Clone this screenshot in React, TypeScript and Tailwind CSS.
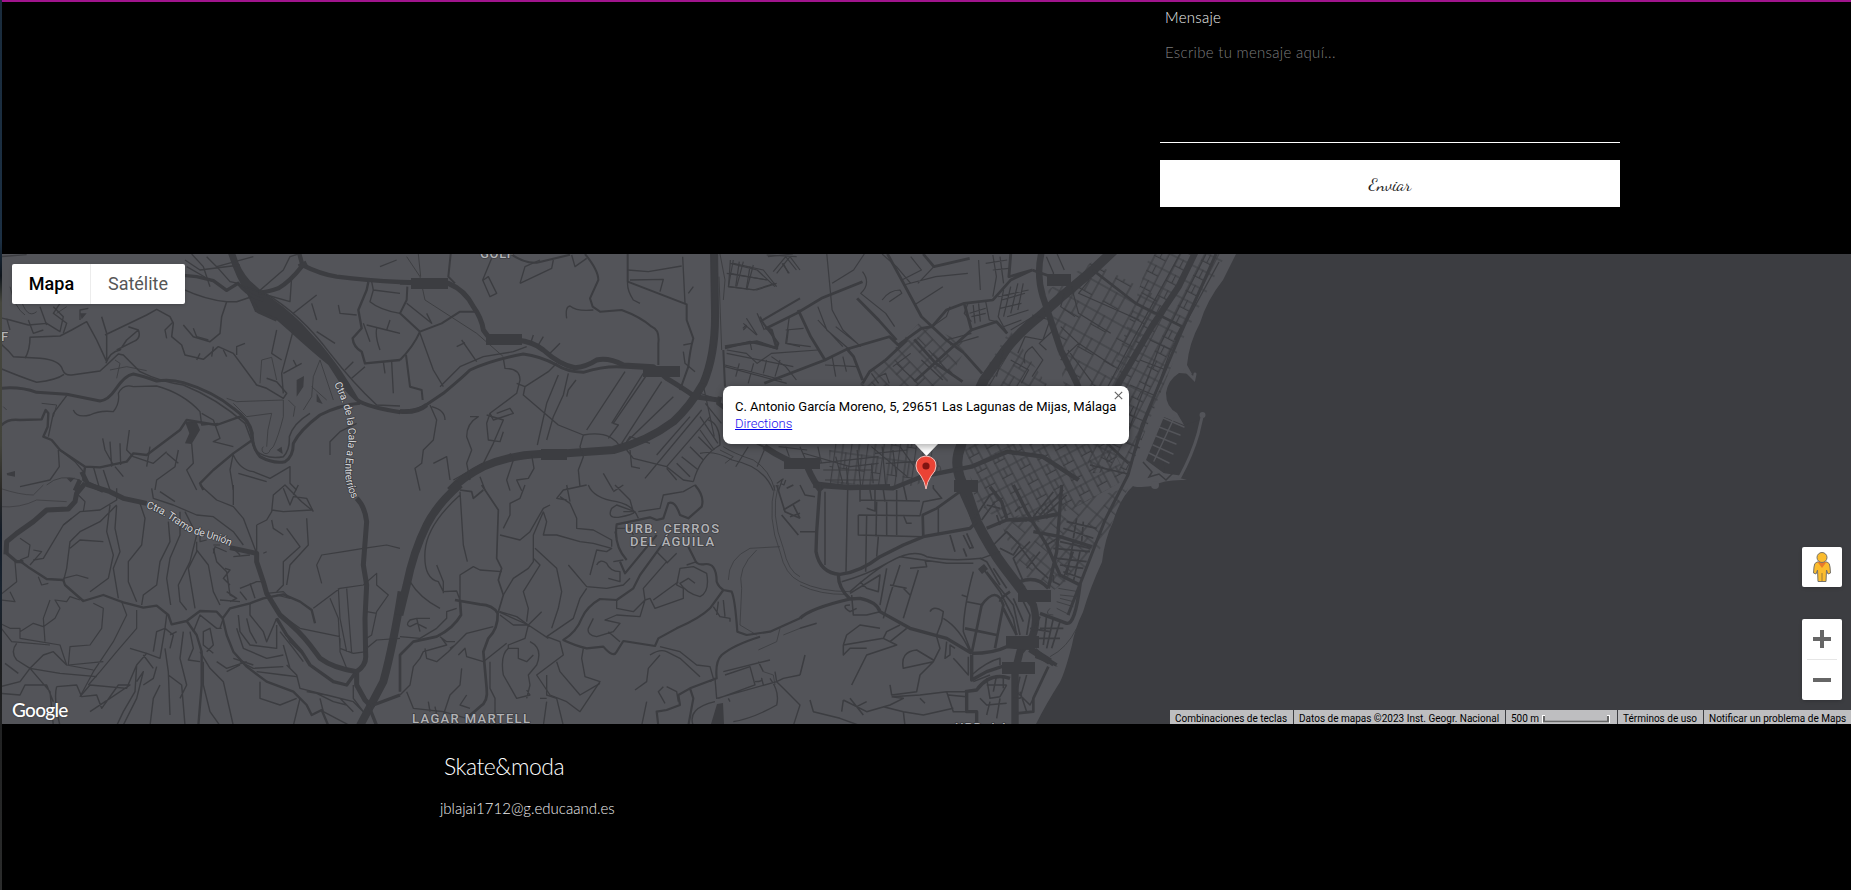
import React from "react";

const ROAD = "#3c3d41";
const LAND = "#535459";

type Stroke = [number, string];

function Tile({ t, lines }: { t: string; lines: Stroke[] }) {
  return (
    <g transform={t} fill="none" stroke={ROAD} strokeLinejoin="round">
      {lines.map(([w, d], i) => (
        <path key={i} d={d} strokeWidth={w} />
      ))}
    </g>
  );
}

const northWest: Stroke[] = [
  [13, "M895 0L907 45Q960 72 1010 80Q1100 92 1200 96M905 50Q870 95 835 115Q800 128 775 127"],
  [26, "M905 38L912 52"],
  [10, "M550 76L590 80L640 92L680 121L714 100Q745 140 790 150M760 160L775 185L830 210"],
  [9, "M0 415Q60 409 110 427L200 433Q260 445 300 453Q325 450 345 420Q375 375 400 372Q430 378 470 393Q510 386 550 398Q640 425 700 475Q750 510 757 550Q755 590 780 620Q820 642 855 635Q880 620 880 580Q900 540 960 495Q1020 465 1080 460"],
  [7, "M0 530Q20 505 60 510L125 508L137 480L145 490L143 530L130 560L155 570L180 600L255 650L250 690L300 720M255 650L300 652L380 635L400 610L440 615L500 570L540 540L560 510L650 525L720 500Q748 510 757 570L700 610L640 660L600 700L610 720M1105 96L1100 120L1075 180L1085 235L1058 265Q1060 290 1085 305L1095 340L1200 330"],
  [14, "M245 665L262 700L310 722M240 690L225 722"],
  [4.5, "M705 100Q745 115 795 130Q900 190 990 310Q1060 400 1130 465L1200 468M0 280Q25 300 40 320L120 325Q180 330 188 360Q195 377 215 375L300 363L320 345L355 312L370 315L420 365Q480 395 550 405Q650 445 735 520L765 600Q800 630 850 620Q870 600 868 560Q880 520 930 490M0 355Q60 380 110 397Q170 390 192 373M75 325Q90 300 90 262L180 258L215 240L260 215L290 270L320 335L320 250L305 200M315 255L440 195L470 178L510 200L520 220L515 260L545 285L555 315L610 328L655 290L700 310L770 405L800 415L850 445L860 430L830 395L800 385M550 225L580 260L630 275L660 250L665 200L680 155Q620 150 550 118M680 155L710 155L755 140M318 340Q330 305 360 300L380 270L415 240M385 230L415 240Q425 265 400 275L350 300"],
  [4, "M200 437L160 490L145 560M220 480Q230 505 270 495Q300 480 340 485Q360 460 355 430Q370 400 400 410L470 408Q550 430 600 485L605 525L655 520M605 490L640 510L660 565L640 575L700 590M500 605L460 640L400 620L380 600L388 540M308 565L315 600L340 645M330 575L335 650M360 580L362 645M450 590L440 650M280 650L300 720M310 660L330 720M345 650L370 680M175 600L178 650L150 690L60 710M180 600L225 635L250 665M535 600L525 650L470 690L465 720M500 610L535 640M575 580L580 640L560 660L590 720M700 610L690 660L700 720M700 615Q720 660 760 665L810 685L870 650L870 700L890 720M715 670L800 695M775 125L850 60L870 20L895 12M800 135L870 155L875 80M880 190L950 135M950 210L935 160M950 245L1005 280M880 240L845 370L850 430M830 240L815 310L845 330M710 315L710 290L735 280M850 370L905 340M890 350L880 330M1095 350L1055 385M1060 335L1035 360"],
  [4, "M0 20L80 14M240 210L240 180L265 175M120 170L140 225M85 210L100 250L130 240M0 203L30 210L85 225L140 220L180 245L190 200L160 170M20 205L30 240M180 160L160 190L200 220L190 250M580 235L590 260L625 270M575 12L610 50L630 110M555 30L600 60L720 45M630 90L560 50M650 50L690 95L715 100M500 265L495 240L520 215M600 310L590 330M640 290L635 320M670 300L680 320M620 20L650 50L760 20M1115 95L1120 120L1200 130M1120 120L1110 155Q1140 180 1200 190M1090 220L1110 275M1100 225L1160 240L1170 210M1130 235Q1125 260 1140 300M1160 240L1200 250M1015 165L1020 190L1070 195M1150 335L1155 370M1175 335L1180 430M1070 520L1020 545L990 575L990 615M1140 50L1190 30"],
  [2.6, "M680 445L710 455L850 450L850 500Q835 560 820 590L810 600M700 460L740 500L815 490Q800 540 800 590M780 400L785 330L815 322L830 390M865 450L885 470L880 500M910 480L935 440L940 380L960 330L970 360L1000 450M935 410L980 450M330 360L380 350L440 362M345 330L360 340L350 385M200 170L170 190M140 705Q180 670 240 690M810 600A12 12 0 1 1 790 590"],
  [3, "M60 140Q80 210 110 185M30 110Q45 175 75 195M20 480L10 470M125 460L170 465L160 500"],
];

const northCentre: Stroke[] = [
  [15, "M0 97L60 98L145 100Q195 120 220 170Q245 205 250 240L265 260L350 270Q400 275 430 300Q480 345 525 353Q560 350 590 330Q625 322 670 345L760 350L800 385Q850 415 885 440L955 450"],
  [24, "M942 0L945 180Q948 310 910 400Q870 470 820 515Q740 575 640 600L500 610L420 612Q330 615 250 650Q190 680 150 722"],
  [13, "M0 485Q50 490 80 465M960 440L955 460L975 475"],
  [9, "M0 482Q40 485 70 470L130 430Q190 380 210 360Q275 330 370 312Q420 318 470 345Q500 365 550 367Q620 345 680 352L730 355"],
  [6, "M152 12L145 80L165 100M22 110L20 150L0 190L60 245L125 220L180 185L230 185M0 330Q40 290 60 245M18 315L30 410L65 420L68 450M555 12Q595 60 595 90L570 145L578 170L600 185L665 180Q720 200 755 230Q780 240 775 280L775 345M683 12L683 95L860 163L860 210L880 265Q870 300 865 350L840 420M330 10Q370 40 410 38L510 14M1070 580L1100 595L1150 630M970 300L975 410M975 295L1050 275L1130 295L1135 280L1090 220L1080 200M1080 215L1200 145"],
  [4, "M380 290L340 305L250 320L180 350L120 410M60 250L100 360L130 410M185 270L230 335M170 290L195 278M275 25L248 90L270 140L290 130L265 80L250 90M360 100L375 50L420 30M360 100L455 55L460 30M515 15L525 50L560 25M580 180Q530 185 510 168Q495 170 500 205M683 60L745 65L845 48M690 90L790 88L780 125M848 20L855 160M865 130L880 110M683 95Q680 120 700 150L720 160M310 325L315 355Q360 355 360 390L350 430L270 490L280 510L340 490L330 475L290 490M470 340L445 365L375 410L350 400M375 410L370 435L440 495L475 525L550 555L540 590L550 620L535 660L540 710M475 375L440 460L412 585M505 370L490 435L460 500L440 570M528 390L505 420L500 440M550 555Q630 540 660 590M675 365L560 540M730 370L635 520M740 375L640 520L655 525L625 565M785 395L665 580M820 440L680 575L690 560L750 580"],
  [4, "M905 480L735 685M930 500L800 650M870 500L770 615M925 510Q960 520 960 585Q900 620 880 695M680 600L700 625L800 650L850 690L880 695M690 600L695 650L720 655M800 655L830 690M830 640L870 680M845 620L895 660M870 590L910 630M895 560L935 600M270 490L260 520L265 570L300 575L310 545M210 500L235 500Q200 520 200 560L215 600L200 640L210 690M260 495L310 510L280 580L250 640L160 690M95 470Q135 480 135 510M90 465L110 510L100 570L70 600L65 640L45 655L60 722M100 640L140 620L150 690M330 610L340 630L320 690L330 722M395 615L402 655L385 685L350 690L365 722M610 670L640 722M240 680L255 720M20 160L95 220L80 190M390 285L400 255M415 285L430 260M450 310L480 280M850 305L855 340L885 365M850 285L875 280"],
  [2.8, "M20 20L60 80L75 150L230 250L310 320M55 12L62 80M960 12L975 90L970 150M957 80L965 300M970 590Q1000 610 1060 630Q1110 660 1125 722M975 640L1000 620L960 600"],
  [3.5, "M1000 30L985 110L1070 120L1130 100M1000 40L1090 60L1130 110M990 70L1100 90M1060 45L1040 120M1030 35L1010 110M1100 15L1190 20M1130 70L1170 20L1200 60M1150 40L1165 70M975 350L1160 400M980 310L1180 350M1100 330L1090 370M1140 330L1125 380M1030 220L1070 255M1040 230L1030 240M1165 240L1160 280L1200 290M1050 275L1055 300"],
];

const cityNorth: Stroke[] = [
  [15, "M39 0L42 180Q43 310 8 400"],
  [28, "M1160 0L1090 70L1010 142L955 195Q890 250 855 300L795 390L755 480L730 590Q705 650 745 722"],
  [18, "M958 0Q940 70 960 140L985 220L1010 300L1055 400L1120 560M1390 0L1340 110L1265 230L1175 395L1100 560"],
  [8, "M70 290L160 275L215 295L200 240L185 235L270 190L340 145L455 95M275 180L310 260L350 330L410 298L530 260L555 285L620 235L650 230L690 180L740 160L820 150L870 90L930 60M525 12L570 100L620 200L690 270L740 310M410 295L430 320L455 390M350 330L180 400M440 145L500 210L550 270M740 160L760 240L830 215L860 250M580 270L520 330L475 365L455 400M600 268L660 340L735 395M930 60L1010 90M870 12L865 80L930 60M740 310L790 370M760 240L600 395M1100 60L1220 160L1350 230L1330 270M1120 560L1200 640M625 12L655 50L755 25"],
  [18, "M180 590Q240 635 300 650Q320 700 340 722"],
  [13, "M320 700L400 710L540 715L620 680L760 650L860 605L960 620L1060 690"],
  [3.4, "M355 12L370 180M370 100L430 60L460 12M455 65Q480 100 450 130L520 190L545 230M510 12L550 50L590 100M565 90L620 60L590 20M570 105L660 80L750 70M600 165L680 110M655 50L610 100M780 30L785 120M510 150Q530 120 560 120L565 130L530 155M85 30L80 110L150 120L210 100M85 40L160 60L210 110M75 70L190 90M140 50L130 115M110 35L100 110M190 20L260 12M205 65L240 20L270 60M230 40L250 70M130 205L160 255M160 190L180 240M130 225L120 235M250 200L240 280L310 290M240 240L290 235M70 345L230 390M75 300L130 310L160 340L200 310L330 300M200 320L240 350L270 390M110 340L100 380M150 340L135 400M330 170L355 240L420 300M370 180L400 240L450 290M380 230L440 280M330 210L400 290M370 320L380 380M400 320L410 365M350 345L440 350"],
  [3.4, "M650 230L690 200L700 170M690 270L760 250M700 285L780 260M640 300L700 370M620 330L680 390M550 340L600 390M590 310L540 350M480 370L500 400M500 380L520 370L530 400M750 160L740 190L760 215M765 165L770 220M780 160L785 215M800 155L810 210L830 215M755 190L800 175M760 200L800 190M850 120L835 200L860 250M870 110L850 200M890 100L870 190M905 100L890 180M845 150L910 130M840 175L900 160M860 200L920 180M850 230L900 210M835 140L920 120M870 240L940 195M930 195L980 210L960 270L910 260L890 310M910 340Q900 310 930 290L960 330L930 380M850 300L830 380M870 330L920 360L900 400M990 240L950 280L970 300M1010 230L1060 280L1010 330M1060 280L1160 350M1030 300L1100 400M820 15L830 80L820 140M840 20L850 100M800 40L860 30M820 60L865 55M970 20L990 70L980 90M1000 12L1020 60M1020 130L1010 170L1050 200M1040 110L1060 190L1150 250M1090 90L1060 130L1230 210"],
  [3.4, "M135 590L100 650M180 600L160 650M10 410L40 560M0 500L50 580M15 460L60 520M0 430L55 450M0 540L40 600M0 610Q40 600 90 630Q180 650 205 722M290 610L420 650L500 640M330 640L500 620M345 660L480 660M350 690L500 690M380 620L400 700M410 650L415 710M440 600L450 710M480 640L485 700M510 590L520 710M540 600L550 680M480 590L580 680M560 590L600 650M490 610L580 600M520 640L610 635M220 590L300 600M240 590L250 620M280 590L300 640M330 590L340 640M215 700Q240 680 230 690L220 722M240 690L235 705L225 700"],
];

const southWest: Stroke[] = [
  [15, "M260 -2L330 20L370 40L440 55M690 188L770 205L770 230L790 290L800 325L840 390Q900 440 930 480L960 520Q1000 550 1070 560Q1100 540 1097 510L1095 400L1100 300L1090 240L1100 110Q1095 65 1070 40M1070 560L1070 600L1095 645L1120 670"],
  [15, "M255 -5L230 25L225 50L205 72L140 75L100 110L50 145L20 170L18 208"],
  [24, "M1205 320Q1180 480 1150 590L1080 722"],
  [10, "M1105 660L1130 722M1120 660L1200 630M20 205L50 230L70 230M830 400L860 450L905 500L930 540L1000 590L1040 600L1065 565"],
  [7, "M60 228L90 250L140 282L190 285L195 300L250 348L310 330L350 345L370 352L430 368L470 362L505 390L515 418L560 408L600 378L650 380L668 400L690 370L750 355L790 340L850 328L900 350L935 375L945 415M560 408L590 450L605 500L605 600L595 722M668 400L680 450L700 500L740 545L800 590L880 620L920 660L935 690L965 675L985 722"],
  [4, "M350 10L350 45L300 75L240 80L190 120L130 220L100 225M350 60L300 110L240 140L210 170L200 250L190 290M310 170L240 165L210 190M330 60L320 140L340 210L325 280L270 320M350 62L345 130L360 200L340 250L355 340M420 55L435 100L425 180L385 230L385 290L410 350M505 110L510 170L480 230L470 300L430 330L425 360M540 80L540 150L510 220L500 280L512 360M555 80L590 150L570 230L535 300L540 350L560 375M590 170L590 200L565 250L580 340L585 370M590 195L625 240L640 320L660 360M455 10L460 40L520 60L590 90L640 95L700 140L730 180M480 20L525 50M600 0L650 45L700 65L730 100L770 205M700 60L700 0M770 120L800 105L815 80L820 30L855 0L905 50L935 75L850 80L815 75M850 10L870 60L880 35L920 40L940 80M895 0L880 30M860 130L900 185L850 230L850 300L830 320M920 100L925 180L870 240L860 300M815 105L820 130L850 150M770 120L770 200"],
  [3.6, "M965 295L950 240L965 210L1030 200L1090 190L1160 180L1200 190M940 370L1020 310L1090 300L1130 265L1130 300L1165 330L1130 380L1115 450L1100 460M990 340L1015 400L1020 490L1060 505L1100 500M1015 310L1020 400L1040 500M1040 310L1055 505M1100 380L1130 385M800 325L830 380L900 430L1020 455M1100 490L1130 465L1200 460M1020 460L1020 500L1040 550L1060 560M45 230L50 290L0 330M0 345L45 350L30 320M190 120L215 100M60 160L90 180L85 215L60 225M90 240L125 200L100 195M115 275L125 300L145 295M190 280L230 270L265 280M0 415L30 430L60 430L60 460L180 480L200 540L280 555M60 440L100 415L130 425L165 400L180 370L165 345L200 350L210 335L240 345M150 345L130 400L135 470M0 425L35 470L150 480M280 355L310 370L305 430L270 480L210 485L205 540L310 530M365 350L380 390L340 470L280 560L240 635M410 375L410 430L350 500L300 560L265 600"],
  [4.2, "M50 475Q30 500 50 525L90 550L130 510L160 500L200 540M90 550L180 565L290 575M90 550L150 620L160 722M0 605L60 590L90 550M0 625L60 630L75 600L140 600L160 650M170 605Q160 640 180 722M170 605L230 600L245 635L290 630L305 670L355 600L390 600L330 640L270 680M15 535L55 565M240 635L270 600L380 610L410 540L440 505L480 520L495 430L470 440L460 500M500 390L495 430L520 450L510 490M410 540L405 620L370 680L350 722M410 590L430 560L410 640L370 720M495 490L505 560L510 690M550 440L540 520L560 600L540 640M470 545L460 580L430 600M430 510L460 550M505 570L545 600L555 722M480 600L460 640L450 722M390 490L440 505M530 440L510 450M610 530L610 600L630 680L660 722M600 500L630 550L670 590L700 722M620 500L640 480L630 430L610 440L610 480L640 505M570 440L580 490L565 525L600 530M580 440L600 390L650 430L665 430M670 400L660 430"],
  [4.2, "M715 390L720 440L750 480L830 490L830 440M740 400L750 440L770 475M750 355L750 390L790 440L800 470L830 400M710 430L730 490L800 520L850 510M720 530L760 550L850 545M830 420L830 475M840 440L880 490L910 530M850 430L870 470L910 510M860 540L890 570L900 610L1020 640L1060 680M770 560L850 570L890 575M650 530L680 550L740 530M680 560L720 540M700 520L760 540M640 190L650 230L680 260L690 330L710 340M675 250L690 255L670 280L690 300M700 215L750 210M700 190L720 210M680 320L710 340L690 350M720 310L770 290L790 290M720 320L740 345M750 295L765 340M660 345L720 350M920 620L980 630L1060 650L1090 680M870 550L850 480M950 625L1000 650L1040 660M780 590L780 640L840 660L890 640M900 640L880 722M1060 600L1060 640L1090 680M960 640L970 680L1050 722"],
  [3.5, "M235 30L255 50L250 80M640 180L660 180M640 205L645 185L680 200M600 150L600 170L620 165M790 205L800 200M800 325L850 320L870 340L830 330"],
  [2.2, "M0 10Q60 30 100 30L130 0M0 65Q60 70 110 45L200 50"],
];

const southCentre: Stroke[] = [
  [24, "M180 -2Q110 60 80 120Q40 200 20 300L-2 390"],
  [8, "M165 345L240 358Q280 360 293 385Q295 430 265 460L250 500L260 610Q265 650 240 665L200 700M180 345L183 390Q160 430 110 455L40 470L0 510L0 620"],
  [6.5, "M885 0Q915 35 905 65L865 100L840 90Q825 45 805 55L790 100L770 105L750 97L650 118Q640 180 680 225M660 230L675 265L770 150M800 160L720 270L700 310L650 345L600 342Q560 365 545 400Q530 440 490 465Q520 480 560 490L610 485Q640 520 650 500L670 468L765 483L775 460L830 430Q900 400 930 370L970 315Q955 305 950 290Q950 230 910 238Q890 240 885 225L865 185M970 315L995 320Q1005 340 1012 440L1040 450L1110 440L1200 400M1080 455Q1000 480 965 510Q945 530 950 580L870 610L835 630L840 660L800 675L770 680L775 722M870 610L880 640L865 722"],
  [5, "M245 0L265 30L295 75L290 220L305 250L295 285L310 330L295 380M180 15L215 20L220 40L250 15"],
  [4, "M375 0L360 40L330 55L330 90L310 130M300 150L360 165L390 140L430 70L450 60M430 80L440 110L430 150L470 150L540 170L580 175L635 190L620 200L590 195L570 270M480 35L510 55L530 100L530 130L580 135L635 165L635 185M500 0L510 50M565 0Q580 40 650 50Q700 60 715 100M715 80L780 70L790 30L850 20L885 0M635 70Q620 100 655 97Q700 90 705 80L650 60L635 70M645 0L690 45L700 80L670 80M640 20L670 0M560 0L490 15L470 40L500 45M180 20L190 180L202 230M180 30Q80 120 75 200Q70 280 115 290L130 320L170 318L180 345M110 240L130 290L130 325M180 345L180 270L220 245L240 255L305 260M310 330L340 280L385 250L400 230L400 150L430 80M405 190L470 250L485 320L475 370L455 430M400 220L420 240L370 320L385 370L380 410M300 380L350 395L385 420L340 420L300 390M295 380L385 420L445 460M385 420L425 380M385 420L375 460L325 480L325 490L355 490L355 520L380 530L400 510M505 240L560 305L620 310L670 300L690 280M560 310L540 340L520 400L440 455L480 470L490 510L410 570L450 630L500 650L540 680L600 590L555 575L545 520L550 490"],
  [4, "M590 240Q600 220 620 235Q630 260 660 260L660 290L625 280M670 225L640 230M700 150L690 130L650 130M700 190L730 160M645 140L650 160M770 200L800 230L730 310L735 345L700 380L650 370L650 345M800 235L830 205M735 345L750 340L765 370L850 340L850 310L830 300L840 250L880 245L920 265Q930 320 900 335Q860 325 840 295L865 280L885 295M860 240L890 230M835 290L760 345M735 345L720 395L650 390L615 405L660 415L640 440L590 455Q560 450 565 430L580 400M625 440L660 470M940 365L960 395L990 400L990 410M955 350L950 390M970 345L975 395M750 510Q780 490 800 500L840 520L900 575M780 485L840 500L890 540L930 545L940 580M780 510L745 550L740 590L705 615M790 605L775 620L795 655M800 605L830 620L835 650M740 650L725 722M930 590L945 580L950 640L1130 590L1125 560M975 570L1050 545L1065 600L955 640M970 560L1110 525M1075 530L1090 560M1065 590Q1090 590 1085 580L1090 600M1110 580Q1140 620 1130 660Q1060 700 1000 710M945 650Q860 670 880 722M985 640L990 650M1130 590L1150 580L1200 570M1130 590L1150 610L1200 660L1180 722"],
  [4, "M0 455L60 460L110 430L140 400L140 380L170 370M60 440L50 400L30 405Q15 420 30 425L50 415L80 430M50 400L90 400M30 290Q60 340 120 370M125 460L140 480L70 500L60 520L40 545L30 600L0 630M120 455L140 470L165 470M75 490L80 520L110 530L145 500L200 445L280 425M175 510L195 490L200 515L250 530M150 490L165 480M250 530L320 475M270 530L270 610L285 640L285 722M325 490Q300 510 310 570L350 640L390 630L380 615M390 470Q430 490 410 540L385 570L390 600L380 640M440 570L440 630L470 640L490 722M420 640L440 640M430 722L440 650M470 530L480 560L540 630L600 595M20 620L40 670L130 680L200 700M85 650L90 680M185 550L180 600L150 630L130 690M200 630L180 660L210 670M105 665L110 690"],
  [2.4, "M1125 0Q1100 100 1140 200Q1155 270 1200 290M1135 0Q1110 90 1150 190Q1165 260 1200 275M985 285Q985 220 1050 190L1140 185M1070 195Q1010 250 1025 310L1020 420L1070 450M1140 430L1130 470L1075 495M1200 430L1150 450M1090 560L1120 570L1125 600"],
  [5, "M1130 0L1155 80L1200 100M1145 90L1195 150M1150 75L1200 45M1180 60L1200 100M1170 95L1200 85M1160 10L1180 0"],
];

const southCity: Stroke[] = [
  [30, "M490 -10L530 110Q570 190 615 250L665 315"],
  [22, "M665 310L700 360Q715 410 697 455L660 500L645 560L645 722"],
  [16, "M40 0L150 8L270 5M480 10L520 100"],
  [10, "M60 0L50 140L48 200Q60 265 120 268Q180 262 240 215L310 180L370 155L510 130L530 110M115 270Q115 310 150 342L180 340Q230 350 240 380L330 430L440 460L515 505M0 400Q30 370 150 342M515 505Q580 505 620 485L690 490L760 540M515 510L515 585L560 560L620 540M495 620L530 615Q570 560 630 580M500 620L500 680L530 680L530 722M560 130L620 105L700 100L780 85M570 5L605 50L620 100M640 0L680 80L740 180L780 270L840 300Q825 420 800 415L720 385M700 140L780 155L875 185M785 0L770 200L745 310M660 290Q710 270 745 310M690 490L770 540"],
  [20, "M690 492L750 530"],
  [8, "M370 155L368 90L410 70L480 20M515 505L545 360Q590 300 610 360L585 490M495 430L590 450M630 320Q600 340 600 350M610 370L650 450M745 545L700 640L700 680L650 685"],
  [4.5, "M75 20L75 240M143 15L138 260M200 90L197 260M0 0L15 30L45 35M0 140L50 140M175 90L360 92L370 50L425 40L400 10L400 0M175 90L175 150L365 155M230 50L228 155M260 50L260 155M290 15L290 150M200 70L225 78L225 15M180 45L360 48M235 155L230 215M180 10L180 50M210 15L215 45M250 15L255 50M310 90L320 115L335 115M415 70L415 145M310 0L320 45M125 290Q200 270 270 230Q340 190 380 215Q450 230 545 220L600 200M150 320Q240 240 300 215L440 235L520 235M150 325L240 270L235 320L200 310L180 290M155 330L160 390L200 390M300 240L270 330L250 400M330 250L380 245L375 225M355 255L310 400M310 310L330 330M270 300L320 310M260 250L240 360M520 260Q490 370 490 440L515 505M500 350L550 360M485 330L500 335M390 380Q400 360 430 380L425 410L410 450M430 400Q480 430 510 500M200 390L240 380M150 360Q120 360 150 380L170 370"],
  [4.5, "M0 430L50 415M130 480L250 460L260 440L300 420M130 480L130 510L150 490L200 490M130 480L140 450L180 420L240 430M250 460L290 480L200 510L155 600M250 460L270 470L320 430M410 455L420 490L400 530L310 550Q300 500 350 495L400 525M440 470L435 520L450 510L450 480L465 490M0 570L15 510M505 515L505 570L470 530L460 520M270 600L275 630L350 620L360 570L400 530M275 635L310 640L270 660L200 680L130 645M130 645L125 680M150 640L190 690M275 635L360 630L440 620L495 620M440 620L460 680L500 680M445 630L500 635M30 645L40 680L120 700L180 722M250 665L310 680L370 690L460 670M310 680L315 722M360 640L375 655M170 665L200 650M560 580L570 640L600 635L620 600M590 570L580 620M610 570L610 610M560 600L620 600M540 640L560 660L620 655M600 640L590 700M570 650L560 690M515 570Q560 530 600 520L600 540M520 590L570 570M660 575L650 620L690 660L700 640M680 570L660 640L640 640M660 620L680 680"],
  [5, "M530 90L570 30L590 20M545 105L585 50M560 60L600 70M580 180L620 140L660 180L640 210L600 190M660 185L710 250L745 280M690 170L640 220L670 290M720 200L680 250M740 180L780 155M590 90L600 120M640 110L700 105L780 90M645 80L660 65M700 95L760 20M720 90L790 15M740 85L800 30M760 270L760 290L780 300M760 190L870 200M770 220L860 230M780 240L850 250M790 260L845 280M820 200L790 280M840 200L820 290M800 110L890 130M790 130L880 160M780 170L870 190M830 100L820 160M850 110L845 170M820 170L800 270M600 300L560 230L540 220M620 310L580 250M545 245L600 320L640 400L650 450M560 260L640 360L660 450M670 350L690 390L680 450M640 340L670 410M720 395L700 440M740 390L730 480M760 400L740 490M780 410L755 490M720 430L790 430M710 460L780 460M690 430L750 440M500 145L520 190M490 150L510 190L520 185M450 150L465 200M490 190L500 215"],
  [2.5, "M0 290Q60 320 150 320M0 300Q60 330 140 328M830 430Q800 490 750 515M750 370Q730 390 760 390M770 350L820 365M780 330L830 335M780 340L820 350M770 370L810 390M775 310L835 320"],
];

const T = (x: number, y: number) => `translate(${x} ${y}) scale(.33333)`;

type Patch = { id: string; w: number; h: number; a: number; pts: string };
const patches: Patch[] = [
  { id: "a", w: 30, h: 26, a: 29, pts: "1048,290 1092,262 1165,300 1098,402 1064,386" },
  { id: "b", w: 22, h: 17, a: 27, pts: "1150,254 1226,254 1180,345 1148,424 1130,470 1085,474 1104,400" },
  { id: "c", w: 32, h: 22, a: -44, pts: "858,386 920,322 968,345 945,386" },
  { id: "d", w: 16, h: 30, a: 8, pts: "829,444 930,444 942,470 915,486 830,484" },
  { id: "e", w: 20, h: 17, a: -28, pts: "964,444 1110,444 1128,478 1080,505 1040,522 1000,522 975,500" },
  { id: "f", w: 24, h: 20, a: 31, pts: "975,386 1010,330 1048,386 1070,444 985,444" },
  { id: "g", w: 30, h: 24, a: 40, pts: "1000,520 1040,510 1128,488 1095,560 1054,590 1020,574" },
];

function MapDrawing() {
  return (
    <svg className="block h-full w-full" viewBox="2 254 1849 470" preserveAspectRatio="none">
      <defs>
        {patches.map((p) => (
          <pattern key={p.id} id={`streets-${p.id}`} width={p.w} height={p.h} patternUnits="userSpaceOnUse" patternTransform={`rotate(${p.a})`}>
            <path
              d={`M0 1H${p.w}M0 ${p.h * 0.55}H${p.w * 0.6}M1 0V${p.h}M${p.w * 0.6} 0V${p.h}M${p.w * 0.3} 0V${p.h * 0.55}`}
              stroke={ROAD}
              strokeWidth="1.15"
              fill="none"
            />
          </pattern>
        ))}
        <path id="road-cala" d="M334 384C345 405 350 425 348 445C345 465 342 480 353 500" />
        <path id="road-union" d="M146 508C158 511 168 518 181 527C196 538 215 537 233 548" />
      </defs>
      <rect x="2" y="254" width="1849" height="470" fill={LAND} />
      {patches.map((p) => (
        <polygon key={p.id} points={p.pts} fill={`url(#streets-${p.id})`} />
      ))}
      <path
        fill={ROAD}
        transform={T(0, 250)}
        d="M684 10L706 10Q720 60 750 92L790 128Q850 165 905 220L960 280Q1010 340 1045 395L1075 445Q1100 465 1200 480L1200 493Q1120 480 1080 462Q1045 440 1020 400L985 345Q930 300 870 245L830 210L765 185Q750 150 740 130Q710 90 684 10ZM555 515L590 515L600 540L575 582L555 580L568 550ZM890 390L912 378L910 410L890 440ZM950 430L968 462L950 455ZM20 670L45 663L45 680L22 676ZM200 685L225 683L212 697ZM830 600L845 590L848 612ZM240 190L260 190L245 208Z"
      />
      <Tile t={T(0, 250)} lines={northWest} />
      <Tile t={T(400, 250)} lines={northCentre} />
      <Tile t="translate(700 250) scale(.35714 .33333)" lines={cityNorth} />
      <Tile t={T(0, 485)} lines={southWest} />
      <Tile t={T(400, 485)} lines={southCentre} />
      <Tile t={T(800, 485)} lines={southCity} />
      <g fill="none" stroke={ROAD} strokeWidth="1.3">
        <path d="M1206 254L1160 345L1125 440M1180 254L1130 345L1090 420M1219 262L1170 352L1132 460M1150 340L1172 350M1140 360L1166 370M1130 385L1156 396M1118 410L1146 422M1105 435L1140 448M1090 465L1128 474" />
        <path strokeWidth="3" d="M1216 254L1180 335L1142 425L1128 475L1105 520L1068 615" />
      </g>
      <g fill={ROAD}>
        <path d="M411 278h37v11h-37zM486 334h36v11h-36zM643 366h37v11h-37zM541 449h26v11h-26zM784 458h36v11h-36zM1047 274h24v12h-24zM954 480h24v12h-24zM1018 590h33v12h-33zM1006 636h33v12h-33zM1002 662h33v12h-33zM711 724L717 704L723 703L724 724zM1036 648L1058 667L1035 658zM978 569l6-5 4 5-6 5z" />
        <path d="M1236 254L1223 280Q1207 300 1200 323Q1189 343 1187 365L1192 374L1179 373Q1168 380 1166 393Q1166 407 1177 413L1184 425L1164 417L1146 460L1165 474L1187 480Q1165 479 1152 486Q1136 488 1133 486Q1120 498 1113 522Q1105 538 1102 562Q1090 588 1083 612Q1075 628 1072 645Q1065 672 1060 682Q1046 704 1036 724L1851 724L1851 254Z" />
        <path d="M1184 425L1203 419L1196 445L1184 474L1165 474L1160 430Z" />
        <circle cx="1155" cy="485" r="4" fill={LAND} />
      </g>
      <g fill="none" stroke={LAND} strokeWidth="3" strokeLinecap="round">
        <path d="M1152 473L1180 477Q1192 455 1198 434L1202 417M1185 370L1194 379L1195 374" />
        <path strokeWidth="1.5" d="M1163 418L1184 427M1159 427L1180 435M1156 436L1176 444M1153 445L1173 454M1149 453L1169 463M1174 418L1154 461" />
        <circle cx="1202.500" cy="415" r="1.500" />
      </g>
      <path d="M1143 462L1152 472L1149 477L1159 474L1166 480L1174 472" fill="none" stroke={ROAD} strokeWidth="1.5" />
      <g
        fontFamily="Roboto, 'Noto Sans', sans-serif"
        fill="#b2b3b6"
        stroke="#3c3d42"
        strokeWidth="1.6"
        paintOrder="stroke"
        strokeLinejoin="round"
        fontSize="13"
        fontWeight="500"
      >
        <text x="480" y="257.500" textLength="34">GOLF</text>
        <text x="1" y="341">F</text>
        <text x="625" y="532.500" textLength="94">URB. CERROS</text>
        <text x="630" y="545.500" textLength="84">DEL ÁGUILA</text>
        <text x="412" y="723" textLength="118">LAGAR MARTELL</text>
        <text x="955" y="732" textLength="53">URB. LA</text>
        <g fontSize="10.500" fontWeight="400" fill="#d3d4d6">
          <text><textPath href="#road-cala" textLength="119">Ctra. de la Cala a Entrerríos</textPath></text>
          <text><textPath href="#road-union" textLength="93">Ctra. Tramo de Unión</textPath></text>
        </g>
      </g>
    </svg>
  );
}

function Pegman() {
  return (
    <svg width="20" height="32" viewBox="0 0 20 32" className="-ml-px">
      <path d="M5 11Q2 12 2 16L1.500 22L4 23L5.500 19L6 30.500H14L14.500 19L16 23L18.500 22L18 16Q18 12 15 11Z" fill="#fbbc2d" stroke="#77736a" strokeWidth="1" />
      <path d="M5.500 11L10 17L14.500 11Z" fill="#e8792b" />
      <path d="M10 22V30" stroke="#9a7a38" />
      <circle cx="10" cy="6.500" r="5" fill="#fbbc2d" stroke="#77736a" />
    </svg>
  );
}

function MapControls() {
  return (
    <>
      <div className="absolute left-[10px] top-[10px] flex h-10 rounded-[2px] bg-white text-[18px] leading-10 shadow-[0_1px_4px_-1px_rgba(0,0,0,0.3)]">
        <button className="w-[78px] pl-px text-center font-medium text-black">Mapa</button>
        <button className="w-[95px] border-l border-[#ececec] text-center text-[#565656]">Satélite</button>
      </div>
      <div className="absolute left-[1800px] top-[293px] flex flex-col gap-8">
        <button className="flex size-10 items-center justify-center rounded-[2px] bg-white shadow-[0_1px_4px_-1px_rgba(0,0,0,0.3)]">
          <Pegman />
        </button>
        <div className="flex h-[81px] w-10 flex-col items-center rounded-[2px] bg-white shadow-[0_1px_4px_-1px_rgba(0,0,0,0.3)]">
          <svg className="h-10 w-10" viewBox="0 0 40 40"><path d="M11 20H29M20 11V29" stroke="#666" strokeWidth="4" /></svg>
          <div className="h-px w-[30px] bg-[#e6e6e6]" />
          <svg className="h-10 w-10" viewBox="0 0 40 40"><path d="M11 20H29" stroke="#666" strokeWidth="4" /></svg>
        </div>
      </div>
      <div className="absolute bottom-0 right-0 flex h-[14px] whitespace-nowrap text-[10px] leading-[17px] text-black [&>*]:border-l [&>*]:border-[#3c3d41] [&>*]:bg-[#bebec0] [&>*]:pl-[5px]">
        <span className="w-[124px]">Combinaciones de teclas</span>
        <span className="w-[212px]">Datos de mapas ©2023 Inst. Geogr. Nacional</span>
        <span className="flex w-[112px] gap-[3px]">
          500 m
          <svg className="mt-[5px]" width="68" height="8" viewBox="0 0 68 8"><path d="M1.500 0V7H66.500V0" fill="none" stroke="#fff" strokeWidth="3" /><path d="M2 1V6.500H66V1" fill="none" stroke="#666" strokeWidth="2" /></svg>
        </span>
        <span className="w-[86px]">Términos de uso</span>
        <span className="w-[148px]">Notificar un problema de Maps</span>
      </div>
      <div className="absolute left-[10px] top-[444px] font-['Lato'] text-[19px] font-medium leading-[24px] tracking-[-0.7px] text-white [text-shadow:0_0_2px_#333]">Google</div>
    </>
  );
}

function InfoWindow() {
  return (
    <div className="absolute left-[721px] top-[132px] flex w-[406px] flex-col items-center">
      <div className="relative h-[58px] w-full rounded-lg bg-white pl-3 pt-[12px] text-[13px] leading-[17px] text-black shadow-[0_2px_7px_1px_rgba(0,0,0,0.3)]">
        <p className="whitespace-nowrap">C. Antonio García Moreno, 5, 29651 Las Lagunas de Mijas, Málaga</p>
        <a className="font-light text-[#1a10ee] underline decoration-[#0000ee]">Directions</a>
        <svg className="absolute right-[6px] top-[5px]" width="9" height="9" viewBox="0 0 9 9"><path d="M.8.8L8.200 8.200M8.200.8L.8 8.200" stroke="#666" strokeWidth="1.200" /></svg>
      </div>
      <svg width="24" height="46" viewBox="0 0 24 46">
        <path d="M1 0H24L12.500 12Z" fill="#fff" />
        <path d="M12 12Q2 13 2 22Q2 27 7 32Q11 38 12 45Q13 38 17 32Q22 27 22 22Q22 13 12 12Z" fill="#ea4335" stroke="#f5c1bc" />
        <circle cx="12" cy="22" r="3.600" fill="#811411" />
      </svg>
    </div>
  );
}

export default function App() {
  return (
    <div className="flex h-[890px] w-[1851px] overflow-hidden bg-black font-['Roboto','Noto_Sans',sans-serif]">
      <div className="w-[2px] shrink-0 bg-[linear-gradient(to_bottom,#1a2c3d_0%,#1c3044_27%,#0e141b_31%,#46473e_34%,#42433b_50%,#2b2a27_55%,#131c28_60%,#1b2530_67%,#1d1e1f_75%,#2b2c2c_100%)]" />
      <div className="flex w-[1849px] flex-col">
        <header className="flex h-[254px] shrink-0 flex-col border-t-2 border-[#a0148c] pl-[1158px] font-['Lato']">
          <form className="flex w-[460px] flex-col">
            <label className="mt-[4px] pl-[5px] text-[15px] font-light leading-[22px] tracking-[0.27px] text-[#f0f0f0]">Mensaje</label>
            <div className="mt-[2px] h-[113px] border-b border-white pl-[5px] pt-[11px] text-[15px] font-light leading-[22px] tracking-[0.3px] text-[#7c7c7c]">Escribe tu mensaje aquí...</div>
            <button type="button" className="mt-[17px] h-[47px] bg-white pt-[2px] font-['Dancing_Script',cursive] text-[18px] text-[#222]">Enviar</button>
          </form>
        </header>
        <main className="relative h-[470px] shrink-0 overflow-hidden">
          <MapDrawing />
          <InfoWindow />
          <MapControls />
        </main>
        <footer className="flex flex-1 flex-col items-start font-['Lato']">
          <h2 className="ml-[442px] mt-[27px] text-[23px] font-light leading-[30px] tracking-[-0.5px] text-white">Skate&amp;moda</h2>
          <a className="ml-[438px] mt-[16px] text-[15px] font-light leading-[22px] text-[#efefef]">jblajai1712@g.educaand.es</a>
        </footer>
      </div>
    </div>
  );
}
